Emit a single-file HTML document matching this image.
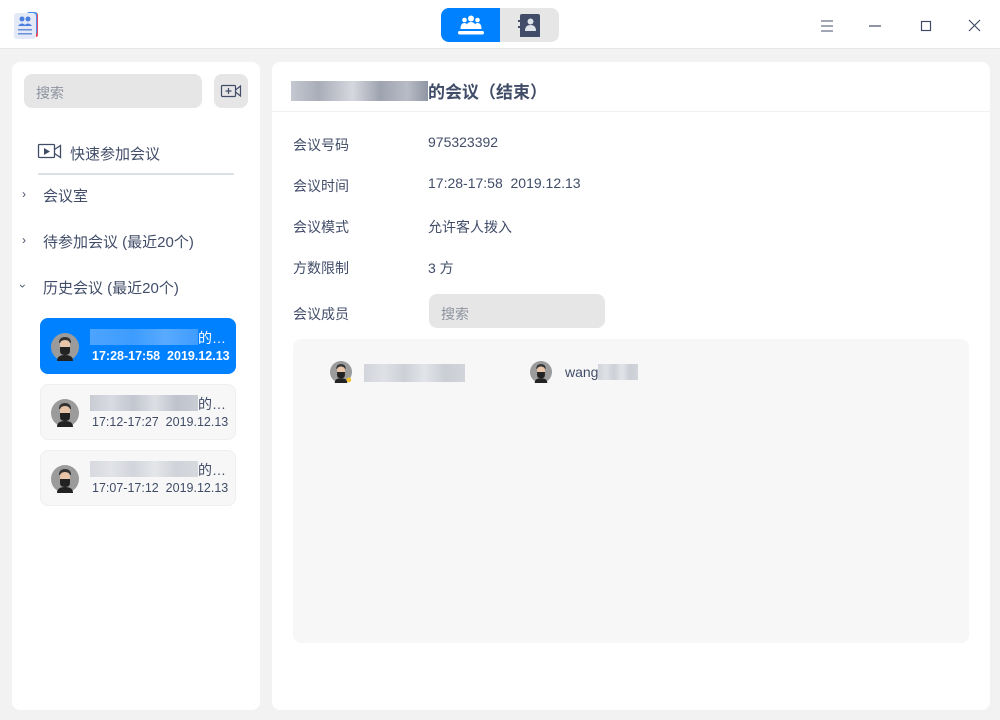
<!DOCTYPE html>
<html><head><meta charset="utf-8"><style>
*{margin:0;padding:0;box-sizing:border-box}
body{width:1000px;height:720px;background:#f2f2f2;font-family:"Liberation Sans","Noto Sans CJK SC",sans-serif;color:#414d68;position:relative;overflow:hidden}
.abs{position:absolute}
.tb{left:0;top:0;width:1000px;height:49px;background:#fff;border-bottom:1px solid #e6e6e6}
.panel{background:#fff;border-radius:8px}
.t{font-size:14px;white-space:nowrap}
.blur{display:inline-block;background:linear-gradient(90deg,#c9ccd4,#d8dbe1 20%,#c2c6cf 40%,#dcdfe4 60%,#bfc3cc 80%,#c8ccd3);}
.card{left:40px;width:196px;height:56px;border-radius:8px;background:#f7f7f7;border:1px solid #efefef}
.card .n{position:absolute;left:49px;top:9px;font-size:14px}
.card .d{position:absolute;left:51px;top:30px;font-size:12.5px;color:#414d68}
</style></head><body>
<div class="abs tb"></div>
<svg class="abs" style="left:12px;top:10px" width="30" height="32" viewBox="0 0 30 32">
<rect x="16" y="3" width="10" height="24" rx="2" fill="#e84b5b"/>
<rect x="15" y="2" width="10" height="22" rx="2" fill="#4a8ff0"/>
<rect x="2" y="3" width="22" height="26" rx="3" fill="#e3e9f7"/>
<circle cx="10" cy="9" r="2.5" fill="#4a7fe0"/><circle cx="16" cy="9" r="2.5" fill="#4a7fe0"/>
<path d="M6 16q4-5 8 0zM12 16q4-5 8 0z" fill="#4a7fe0"/>
<rect x="6" y="19" width="14" height="1.5" fill="#6a8fd8"/><rect x="6" y="23" width="14" height="1.5" fill="#6a8fd8"/>
</svg>
<div class="abs" style="left:441px;top:8px;width:118px;height:34px;border-radius:8px;background:#e6e6e6;overflow:hidden">
<div class="abs" style="left:0;top:0;width:59px;height:34px;background:#0081ff"></div>
<svg class="abs" style="left:16px;top:6px" width="28" height="22" viewBox="0 0 28 22">
<circle cx="14" cy="4.5" r="3" fill="#fff"/><circle cx="7.5" cy="6" r="2.3" fill="#fff"/><circle cx="20.5" cy="6" r="2.3" fill="#fff"/>
<path d="M9 15q0-7 5-7t5 7z" fill="#fff"/><path d="M3.5 15q0-6 4-6 2 0 2.5 2-1 2-1 4z" fill="#fff"/><path d="M24.5 15q0-6-4-6-2 0-2.5 2 1 2 1 4z" fill="#fff"/>
<rect x="1" y="17" width="26" height="3.5" rx="1.7" fill="#fff"/>
</svg>
<svg class="abs" style="left:77px;top:5px" width="24" height="24" viewBox="0 0 24 24">
<rect x="2" y="1" width="20" height="24" rx="2" fill="#414d68"/>
<circle cx="12.5" cy="8.5" r="3" fill="#dfe3ea"/><path d="M7 18q0-6 5.5-6t5.5 6z" fill="#dfe3ea"/>
<rect x="0" y="7" width="3" height="2" fill="#414d68"/><rect x="0" y="13" width="3" height="2" fill="#414d68"/>
</svg>
</div>
<svg class="abs" style="left:815px;top:15px" width="175" height="22" viewBox="0 0 175 22">
<g stroke="#414d68" stroke-width="1.2" fill="none">
<path d="M6 6h12M6 11h12M6 16h12" stroke-width="1" />
<path d="M54 11h12"/>
<rect x="106.5" y="6.5" width="9" height="9"/>
<path d="M154 5l11 11M165 5l-11 11"/>
</g></svg>

<div class="abs panel" style="left:12px;top:62px;width:248px;height:648px"></div>
<div class="abs" style="left:24px;top:74px;width:178px;height:34px;border-radius:8px;background:#e6e6e6"></div>
<div class="abs t" style="left:36px;top:83px;color:#8d939f">搜索</div>
<div class="abs" style="left:214px;top:74px;width:34px;height:34px;border-radius:8px;background:#e6e6e6"></div>
<svg class="abs" style="left:219px;top:82px" width="24" height="18" viewBox="0 0 24 18">
<g stroke="#414d68" stroke-width="1.2" fill="none"><rect x="2.5" y="3.5" width="14" height="11" rx="1"/><path d="M16.5 8l5-4v10l-5-4M9.5 6v6M6.5 9h6"/></g></svg>
<svg class="abs" style="left:37px;top:143px" width="26" height="18" viewBox="0 0 26 18">
<g stroke="#414d68" stroke-width="1.3" fill="none"><rect x="1.5" y="1.5" width="16" height="13" rx="1"/><path d="M17.5 6.5l6-4v12l-6-4"/></g><path d="M7 5l6 3.5-6 3.5z" fill="#414d68"/></svg>
<div class="abs t" style="left:70px;top:143px;font-size:15px">快速参加会议</div>
<div class="abs" style="left:38px;top:173px;width:196px;height:2px;background:#d8e2e6"></div>
<div class="abs t" style="left:22px;top:187px;font-size:12px">›</div>
<div class="abs t" style="left:43px;top:185px;font-size:15px">会议室</div>
<div class="abs t" style="left:22px;top:233px;font-size:12px">›</div>
<div class="abs t" style="left:43px;top:231px;font-size:15px">待参加会议 (最近20个)</div>
<div class="abs t" style="left:21px;top:279px;font-size:12px;transform:rotate(90deg)">›</div>
<div class="abs t" style="left:43px;top:277px;font-size:15px">历史会议 (最近20个)</div>

<svg width="0" height="0" style="position:absolute"><defs>
<g id="av"><circle cx="14" cy="14" r="14" fill="#9b9b9b"/><path d="M6 28q0-6 8-6t8 6z" fill="#222"/><rect x="9" y="7" width="10" height="14" rx="4" fill="#e8c4a8"/><path d="M8 10q0-6 6-6t6 6l-1 0q-1-3-5-3t-5 3z" fill="#333"/><path d="M9 14h10v4q0 4-5 4t-5-4z" fill="#222"/></g>
</defs></svg>

<div class="abs card" style="top:318px;background:#0081ff;border-color:#0081ff;color:#fff">
<svg class="abs" style="left:10px;top:14px" width="28" height="28"><use href="#av"/></svg>
<div class="n" style="color:#fff"><span class="blur" style="width:108px;height:16px;vertical-align:-2px;background:linear-gradient(90deg,#4da4ff,#3d9cff 40%,#58aaff 70%,#3f9cff)"></span>的…</div>
<div class="d" style="color:#fff;font-weight:bold">17:28-17:58&nbsp; 2019.12.13</div>
</div>
<div class="abs card" style="top:384px">
<svg class="abs" style="left:10px;top:14px" width="28" height="28"><use href="#av"/></svg>
<div class="n"><span class="blur" style="width:108px;height:16px;vertical-align:-2px"></span>的…</div>
<div class="d">17:12-17:27&nbsp; 2019.12.13</div>
</div>
<div class="abs card" style="top:450px">
<svg class="abs" style="left:10px;top:14px" width="28" height="28"><use href="#av"/></svg>
<div class="n"><span class="blur" style="width:108px;height:16px;vertical-align:-2px;opacity:.7"></span>的…</div>
<div class="d">17:07-17:12&nbsp; 2019.12.13</div>
</div>

<div class="abs panel" style="left:272px;top:62px;width:718px;height:648px"></div>
<div class="abs" style="left:272px;top:111px;width:718px;height:1px;background:#f0f0f0"></div>
<div class="abs t" style="left:291px;top:78px;font-size:17px;font-weight:bold"><span class="blur" style="width:137px;height:20px;vertical-align:-3px;background:linear-gradient(90deg,#c5c8d0,#a9adb8 20%,#d6d8de 45%,#9ea3b0 65%,#b8bcc6 85%,#8f95a3)"></span>的会议（结束）</div>
<div class="abs t" style="left:293px;top:135px">会议号码</div><div class="abs t" style="left:428px;top:134px">975323392</div>
<div class="abs t" style="left:293px;top:176px">会议时间</div><div class="abs t" style="left:428px;top:175px">17:28-17:58&nbsp; 2019.12.13</div>
<div class="abs t" style="left:293px;top:217px">会议模式</div><div class="abs t" style="left:428px;top:217px">允许客人拨入</div>
<div class="abs t" style="left:293px;top:258px">方数限制</div><div class="abs t" style="left:428px;top:258px">3 方</div>
<div class="abs t" style="left:293px;top:304px">会议成员</div>
<div class="abs" style="left:429px;top:294px;width:176px;height:34px;border-radius:8px;background:#e6e6e6"></div>
<div class="abs t" style="left:441px;top:304px;color:#8d939f">搜索</div>
<div class="abs" style="left:293px;top:339px;width:676px;height:304px;border-radius:8px;background:#f7f7f7"></div>
<svg class="abs" style="left:330px;top:361px" width="22" height="22" viewBox="0 0 28 28"><use href="#av"/><circle cx="24" cy="24" r="3" fill="#f2c02c"/></svg>
<div class="abs blur" style="left:364px;top:364px;width:101px;height:18px;opacity:.8"></div>
<svg class="abs" style="left:530px;top:361px" width="22" height="22" viewBox="0 0 28 28"><use href="#av"/></svg>
<div class="abs t" style="left:565px;top:364px">wang<span class="blur" style="width:40px;height:16px;vertical-align:-3px;opacity:.8"></span></div>
</body></html>
